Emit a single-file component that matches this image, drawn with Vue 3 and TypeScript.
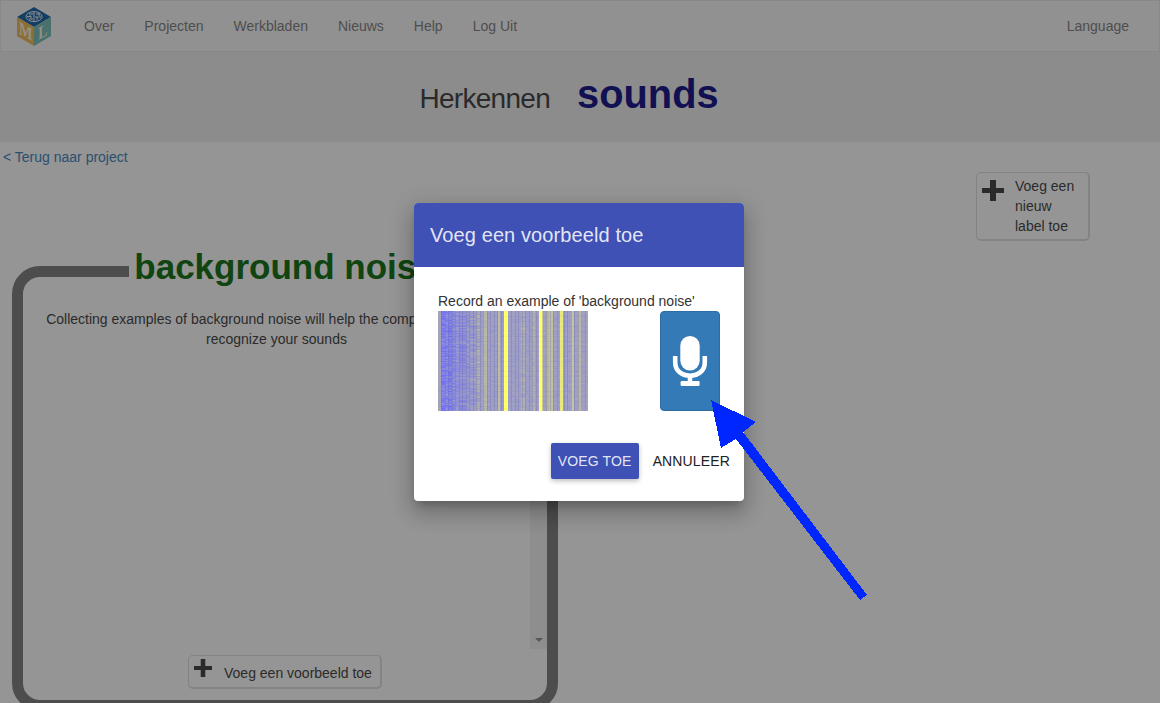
<script setup lang="ts">
import { onMounted, ref } from 'vue'

const links: string[] = ['Over', 'Projecten', 'Werkbladen', 'Nieuws', 'Help', 'Log Uit']
const spectrogram = ref<HTMLCanvasElement | null>(null)

type Band = [start: number, end: number, r: number, g: number, b: number, noise: number]

const bands: Band[] = [
  [0, 3, 164, 164, 184, 4],
  [3, 7, 125, 125, 238, 16],
  [7, 10, 134, 134, 226, 16],
  [10, 14, 126, 126, 234, 15],
  [14, 17, 138, 138, 222, 15],
  [17, 21, 146, 146, 214, 12],
  [21, 28, 141, 141, 218, 14],
  [28, 32, 150, 150, 209, 11],
  [32, 38, 152, 152, 205, 14],
  [38, 42, 167, 167, 185, 14],
  [45, 49, 181, 181, 168, 6],
  [60, 62, 188, 188, 163, 3],
  [66, 70, 255, 255, 106, 0],
  [83, 87, 172, 172, 180, 12],
  [94, 97, 172, 172, 180, 10],
  [101, 104, 255, 255, 106, 0],
  [104, 105, 203, 203, 145, 3],
  [108, 111, 180, 180, 166, 4],
  [111, 115, 194, 194, 158, 2],
  [122, 125, 233, 233, 124, 2],
  [133, 136, 195, 195, 158, 3],
  [140, 144, 184, 184, 168, 3],
  [147, 150, 165, 165, 182, 4],
]

onMounted(() => {
  const ctx = spectrogram.value?.getContext('2d')
  if (!ctx) return
  let seed = 71
  const random = (): number => {
    seed = (seed * 16807) % 2147483647
    return seed / 2147483647 - 0.5
  }
  const paint = ([start, end, r, g, b, noise]: Band): void => {
    for (let y = 0; y < 100; y++) {
      const n = random() * noise * 2
      const ripple = y % 5 === 0 ? -4 : 0
      ctx.fillStyle = `rgb(${r + n + ripple},${g + n + ripple},${b - n + ripple})`
      ctx.fillRect(start, y, end - start, 1)
    }
  }
  for (let x = 0; x < 150; x += 3.5) {
    paint([Math.round(x), Math.round(x + 3.5), 159, 159, 199, 5])
  }
  bands.forEach(paint)
  ctx.fillStyle = 'rgba(105,105,165,0.32)'
  for (let x = 3; x < 150; x += 3.5) {
    const column = Math.round(x)
    const bright = (column >= 65 && column <= 70) || (column >= 100 && column <= 105) || (column >= 121 && column <= 125)
    if (!bright) ctx.fillRect(column, 0, 1, 100)
  }
})
</script>

<template>
  <div class="page">
    <nav class="navbar">
      <svg class="logo" width="34" height="39" viewBox="0 0 34 39">
        <path d="M17 0 34 10 17 20 0 10Z" fill="#0b58a2" />
        <path d="M0 10 17 20V39L0 29Z" fill="#eeb548" />
        <path d="M34 10 17 20V39L34 29Z" fill="#6bb8b3" />
        <g fill="none" stroke="#e9f0f5" stroke-width="1">
          <ellipse cx="17" cy="9.6" rx="8" ry="5" />
          <path d="M17 5v9M10 9.5h4M13 5.5v3l-2 2M12 12h4M14 7h3M19 7h4M18 10h6M20 10v3M22 6v3M14 9v3" />
        </g>
        <text class="cube-letter" transform="matrix(1 .55 0 1 2 26.5)" textLength="13.5" lengthAdjust="spacingAndGlyphs">M</text>
        <text class="cube-letter" transform="matrix(1 -.55 0 1 21.3 33)" textLength="9" lengthAdjust="spacingAndGlyphs">L</text>
      </svg>
      <a v-for="link in links" :key="link" class="nav-link">{{ link }}</a>
      <a class="nav-link language">Language</a>
    </nav>
    <header class="banner">
      <span class="banner-title">Herkennen</span>
      <strong class="project-name">sounds</strong>
    </header>
    <a class="back">&lt; Terug naar project</a>
    <div class="toolbar">
      <button class="add label-button">
        <svg width="22" height="22" viewBox="0 0 22 22"><path d="M8 0h6v8h8v5h-8v8H8v-8H0V8h8Z" fill="#333" /></svg>
        <span>Voeg een<br>nieuw<br>label toe</span>
      </button>
    </div>
    <section class="bucket">
      <h2 class="bucket-title">background noise</h2>
      <div class="examples">
        <p>Collecting examples of background noise will help the computer to learn to recognize your sounds</p>
        <div class="scrollbar"><i></i></div>
      </div>
      <button class="add example-button">
        <svg width="18" height="18" viewBox="0 0 18 18"><path d="M6.7 0h4.6v7H18v4h-6.7v7H6.7v-7H0V7h6.7Z" fill="#333" /></svg>
        <span>Voeg een voorbeeld toe</span>
      </button>
    </section>

    <div class="backdrop">
      <div class="dialog" role="dialog">
        <div class="dialog-header">Voeg een voorbeeld toe</div>
        <div class="dialog-body">
          <div class="prompt">Record an example of 'background noise'</div>
          <div class="recorder">
            <canvas ref="spectrogram" width="150" height="100"></canvas>
            <button class="record" aria-label="Record">
              <svg width="36" height="52" viewBox="0 0 36 52">
                <rect x="8.3" y="1" width="19.4" height="34.5" rx="9.7" fill="#fff" />
                <path d="M3.2 21v6.2c0 8.3 6.1 13.5 14.8 13.5s14.8-5.2 14.8-13.5V21" fill="none" stroke="#fff" stroke-width="4.6" />
                <path d="M18 41v7" stroke="#fff" stroke-width="4.5" />
                <rect x="8.6" y="46" width="19" height="5" rx="1.2" fill="#fff" />
              </svg>
            </button>
          </div>
        </div>
        <div class="actions">
          <button class="action primary">VOEG TOE</button>
          <button class="action">ANNULEER</button>
        </div>
      </div>
    </div>
    <svg class="arrow" width="156" height="202" viewBox="0 0 156 202">
      <path d="M0 0 45 22 32 32 156 195 149 200 25 39 10 48Z" fill="#0026ff" shape-rendering="crispEdges" />
    </svg>
  </div>
</template>

<style>
body { overflow: hidden; }
</style>

<style scoped>
* { box-sizing: border-box; }
.page {
  position: relative;
  height: 703px;
  overflow: hidden;
  background: #fff;
  color: #333;
  font: 14px/20px "Liberation Sans", Arial, sans-serif;
}
button { font: inherit; color: inherit; }
.navbar {
  display: flex;
  align-items: center;
  height: 52px;
  padding: 0 15px 0 16px;
  border: 1px solid #e7e7e7;
  background: #f8f8f8;
}
.logo { margin-right: 17px; }
.nav-link { padding: 0 15px; color: #777; }
.nav-link:nth-of-type(1) { padding-left: 16px; }
.language { margin-left: auto; }
.cube-letter { font: bold 18px "Liberation Serif", serif; fill: #fff4dd; }
.banner {
  display: flex;
  justify-content: center;
  align-items: baseline;
  gap: 27px;
  height: 90px;
  padding: 17px 22px 0 0;
  background: #eee;
  line-height: 50px;
}
.banner-title { font-size: 28px; letter-spacing: -.7px; }
.project-name { color: #000080; font-size: 39.8px; }
.back { display: block; padding: 5px 3px; color: #337ab7; }
.toolbar { display: flex; justify-content: flex-end; padding-right: 70px; }
.add {
  display: flex;
  border: 1px solid #ddd;
  border-right-width: 2px;
  border-bottom-width: 2px;
  border-radius: 5px;
  background: #fff;
  text-align: left;
}
.label-button { width: 114px; height: 69px; gap: 11px; padding: 3px 5px; }
.label-button svg { margin-top: 4px; }
.bucket {
  display: flex;
  flex-direction: column;
  align-items: center;
  width: 546px;
  height: 445px;
  margin: 25px 0 0 12px;
  border: 11px solid #767676;
  border-radius: 28px;
}
.bucket-title {
  height: 40px;
  margin: -30px 0 0;
  padding: 0 5.5px;
  background: #fff;
  color: #006400;
  font-size: 35px;
  line-height: 40px;
}
.examples { display: flex; width: 100%; height: 362px; }
.examples p { flex: 1; margin: 0; padding: 22px 16px 0; text-align: center; }
.scrollbar {
  display: flex;
  align-items: flex-end;
  justify-content: center;
  width: 17px;
  padding-bottom: 7px;
  background: #f1f1f1;
}
.scrollbar i { border: 4px solid transparent; border-top-color: #888; border-bottom: 0; }
.example-button { width: 194px; height: 34px; margin-top: 6px; padding: 3px 5px; gap: 12px; }
.example-button span { padding-top: 4px; white-space: nowrap; }
.backdrop {
  position: absolute;
  inset: 0;
  display: flex;
  align-items: center;
  justify-content: center;
  padding-right: 2px;
  padding-top: 1px;
  background: rgba(33, 33, 33, 0.48);
}
.dialog {
  width: 330px;
  height: 298px;
  overflow: hidden;
  border-radius: 4px;
  background: #fff;
  box-shadow: 0 7px 8px -4px rgba(0, 0, 0, .2), 0 13px 19px 2px rgba(0, 0, 0, .14), 0 5px 24px 4px rgba(0, 0, 0, .12);
}
.dialog-header {
  height: 64px;
  padding: 0 16px;
  background: #3f51b5;
  color: rgba(255, 255, 255, .87);
  font-size: 20px;
  letter-spacing: .1px;
  line-height: 64px;
}
.dialog-body { padding: 24px 24px 0; }
.recorder { display: flex; justify-content: space-between; }
canvas { display: block; }
.record {
  display: grid;
  place-items: center;
  width: 60px;
  height: 100px;
  padding: 0;
  border: 1px solid #2e6da4;
  border-radius: 4px;
  background: #337ab7;
}
.actions { display: flex; justify-content: flex-end; gap: 8px; padding: 32px 8px 0; }
.action {
  height: 36px;
  padding: 0 6px;
  border: 0;
  border-radius: 2px;
  background: transparent;
  color: #212121;
  letter-spacing: .14px;
  white-space: nowrap;
}
.primary {
  width: 88px;
  background: #3f51b5;
  color: rgba(255, 255, 255, .87);
  box-shadow: 0 2px 5px rgba(0, 0, 0, .26);
}
.arrow { position: absolute; left: 711px; top: 400px; }
</style>
